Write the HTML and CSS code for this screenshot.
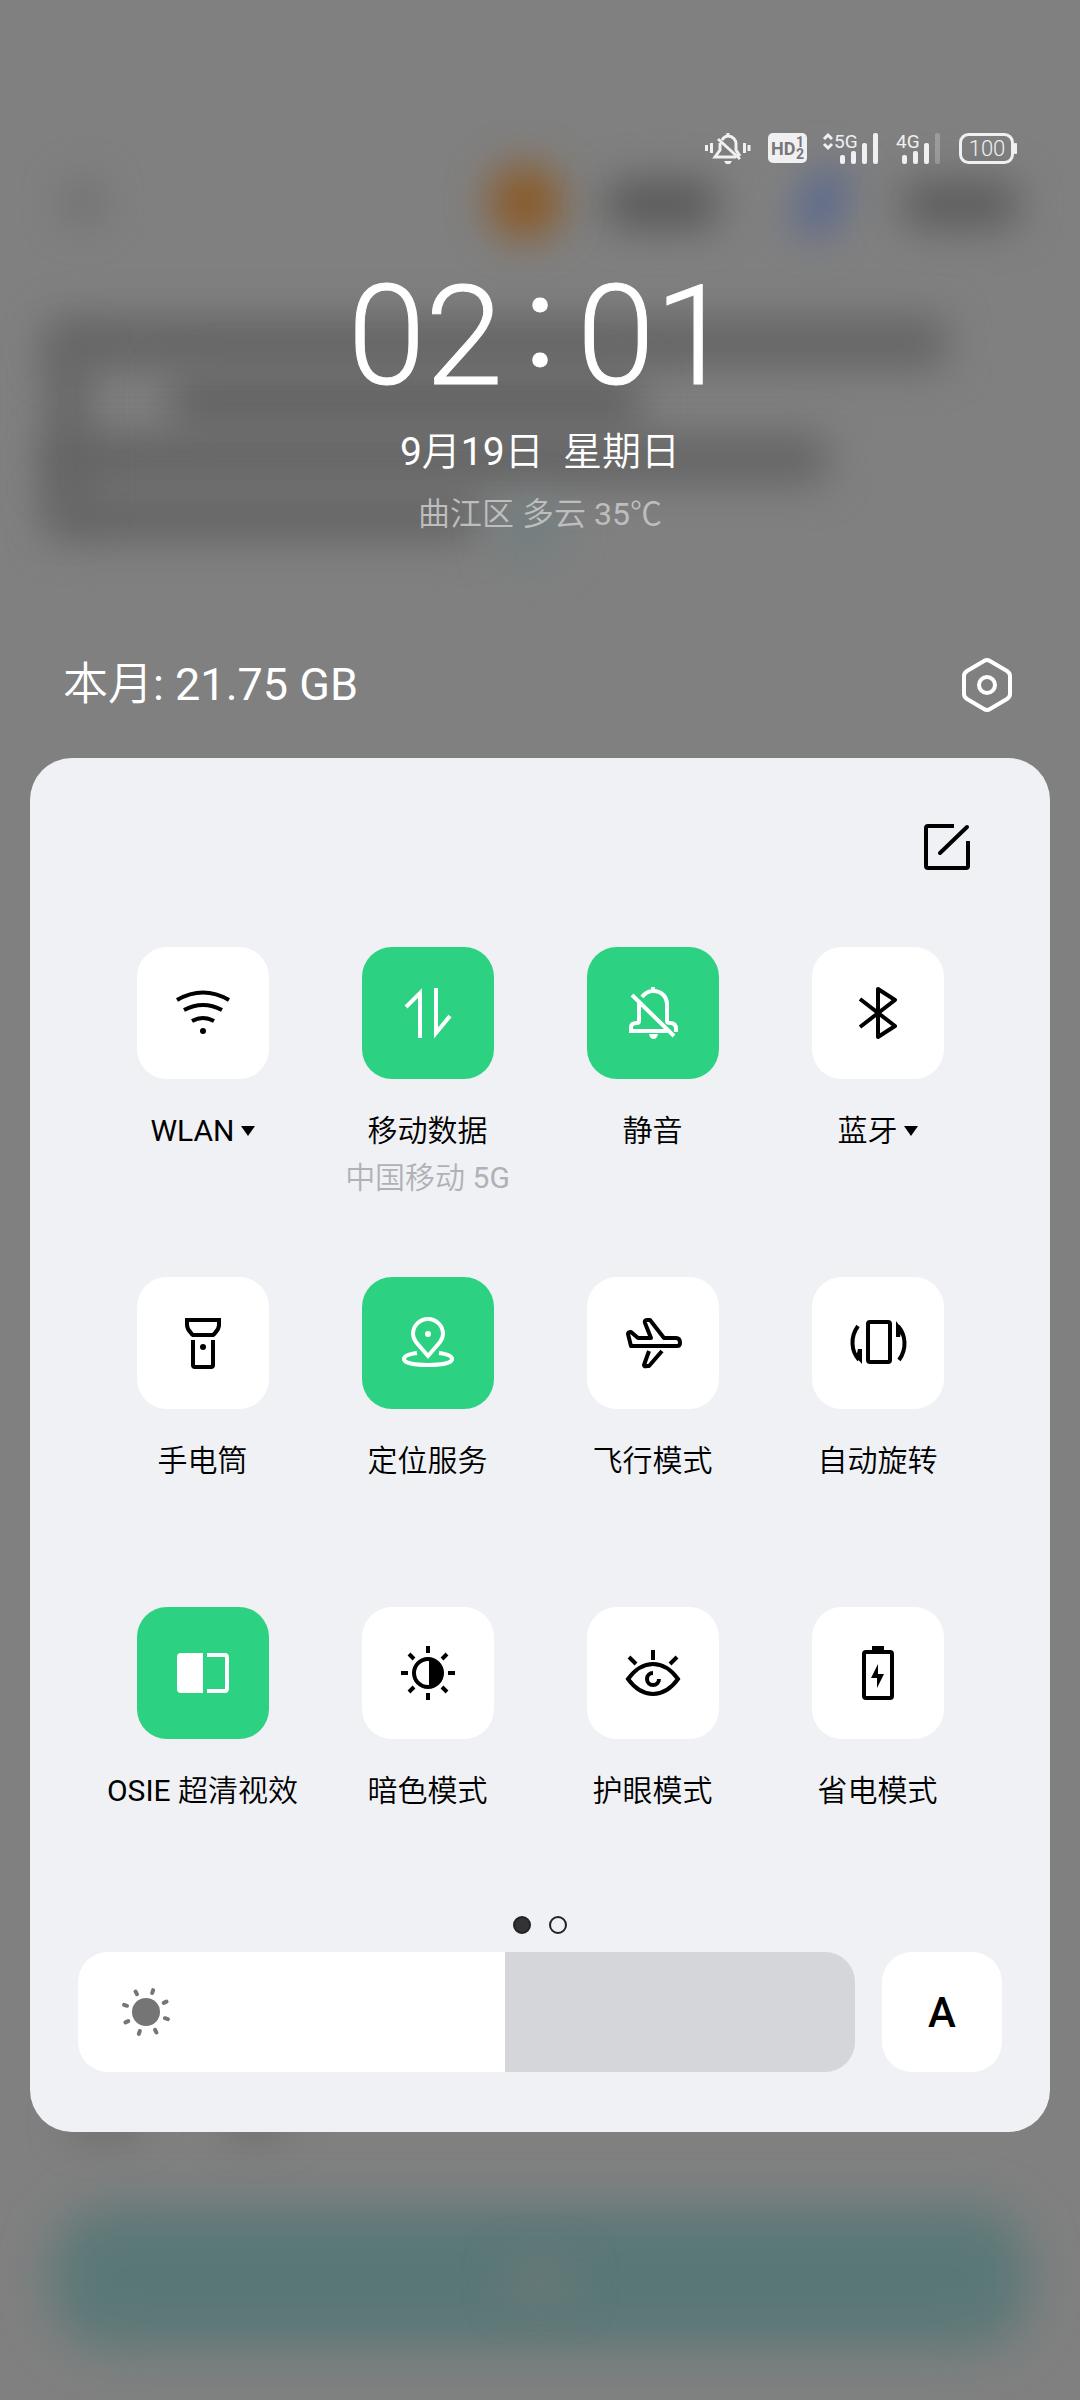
FILE: index.html
```html
<!DOCTYPE html>
<html lang="zh-CN">
<head>
<meta charset="utf-8">
<meta name="viewport" content="width=device-width, initial-scale=1">
<title>控制中心</title>
<link rel="stylesheet" href="styles.css">
</head>
<body>
<div class="backdrop" aria-hidden="true">
  <i class="blob blob-close"></i>
  <i class="blob blob-orange"></i>
  <i class="blob blob-word-a"></i>
  <i class="blob blob-pen"></i>
  <i class="blob blob-word-b"></i>
  <i class="blob blob-line-1"></i>
  <i class="blob blob-line-2"></i>
  <i class="blob blob-line-3"></i>
  <i class="blob blob-line-4"></i>
  <i class="blob blob-line-5"></i>
  <i class="blob blob-side"></i>
  <i class="blob blob-foot-a"></i>
  <i class="blob blob-foot-b"></i>
  <i class="blob blob-action"></i>
  <i class="blob blob-action-label"></i>
</div>
<main class="screen">
  <div class="status">
    <svg class="status-bell" width="46" height="32" viewBox="0 0 46 32" fill="none" stroke="#f0f0f2" stroke-width="3">
      <path d="M1.500 13v6M6.500 11v10M39.500 11v10M44 13v6"/>
      <path d="M23 1v4M17 8c2-3 4-4 6-4 5 0 8 4 8 8v6l4 6M15 11v7l-5 7h21M13 7l22 20"/>
      <path d="M19 29h8l-2 3h-4z" fill="#f0f0f2" stroke="none"/>
    </svg>
    <svg class="status-hd" width="39" height="30" viewBox="0 0 39 30">
      <rect width="39" height="30" rx="5" fill="#f0f0f2"/>
      <text x="3" y="22" class="hd">HD</text>
      <text x="28" y="14" class="hd-sim">1</text>
      <text x="28" y="26" class="hd-sim">2</text>
    </svg>
    <svg class="status-5g" width="57" height="45" viewBox="0 -7 57 45" fill="#f0f0f2">
      <path d="M2 6l4-4 4 4M2 11l4 4 4-4" fill="none" stroke="#f0f0f2" stroke-width="3"/>
      <text x="12" y="15" class="net">5G</text>
      <rect x="18" y="22" width="5" height="9" rx="2"/><rect x="29" y="18" width="5" height="13" rx="2"/><rect x="40" y="10" width="5" height="21" rx="2"/><rect x="51" y="0" width="5" height="31" rx="2"/>
    </svg>
    <svg class="status-4g" width="45" height="45" viewBox="0 -7 45 45" fill="#f0f0f2">
      <text x="0" y="15" class="net">4G</text>
      <rect x="6" y="22" width="5" height="9" rx="2"/><rect x="17" y="18" width="5" height="13" rx="2"/><rect x="28" y="10" width="5" height="21" rx="2"/><rect x="39" y="0" width="5" height="31" rx="2" opacity=".25"/>
    </svg>
    <svg class="status-battery" width="58" height="31" viewBox="0 0 58 31">
      <rect x="1.500" y="1.500" width="52" height="28" rx="8" fill="none" stroke="#f0f0f2" stroke-width="3"/>
      <rect x="55" y="10" width="3" height="11" rx="1" fill="#f0f0f2"/>
      <text x="28" y="23" text-anchor="middle" class="level">100</text>
    </svg>
  </div>
  <header class="head">
    <time class="clock" datetime="02:01"><span>02</span><span class="colon">:</span><span>01</span></time>
    <p class="date">9月19日&nbsp; 星期日</p>
    <p class="weather">曲江区 多云 35℃</p>
  </header>
  <div class="usage">
    <span>本月: 21.75 GB</span>
    <button class="icon-button" type="button" aria-label="设置">
      <svg width="54" height="56" viewBox="0 0 54 56" fill="none" stroke="#fff" stroke-width="4" stroke-linejoin="round"><path d="M24 4q3-2 6 0l17 10q3 2 3 5v18q0 3-3 5L30 52q-3 2-6 0L7 42q-3-2-3-5V19q0-3 3-5z"/><circle cx="27" cy="28" r="8"/></svg>
    </button>
  </div>
  <section class="panel" aria-label="快捷开关">
    <div class="panel-top">
      <button class="icon-button" type="button" aria-label="编辑">
        <svg width="46" height="46" viewBox="0 0 46 46" fill="none" stroke="#000" stroke-width="4"><path d="M30 2H4q-2 0-2 2v38q0 2 2 2h38q2 0 2-2V17"/><path d="M16 29L43 3" stroke-linecap="round"/></svg>
      </button>
    </div>
    <div class="tiles">
      <button class="tile" type="button">
        <span class="face"><svg viewBox="0 0 60 60"><path d="M4 17q26-15 52 0M11 27q19-10 38 0M19 38q11-6 22 0"/><circle class="solid" cx="30" cy="48" r="3"/></svg></span>
        <span class="label">WLAN<i class="caret"></i></span>
      </button>
      <button class="tile on" type="button" aria-pressed="true">
        <span class="face"><svg viewBox="0 0 60 60"><path d="M8 24L22 10v45M38 5v45l14-17"/></svg></span>
        <span class="label">移动数据</span><span class="sub">中国移动 5G</span>
      </button>
      <button class="tile on" type="button" aria-pressed="true">
        <span class="face"><svg viewBox="0 0 60 60"><path d="M30 4v4M19 14c3-4 7-6 11-6 9 0 14 6 14 14v16q0 2 3 2 6 0 6 6v3M16 18v20q0 2-2 2-6 0-6 4v4h36M9 12l42 41"/><path class="solid" d="M26 51h9q-1 5-4.500 5T26 51z"/></svg></span>
        <span class="label">静音</span>
      </button>
      <button class="tile" type="button">
        <span class="face"><svg viewBox="0 0 60 60"><path d="M12 16l35 27-17 11V6l17 11-35 27" stroke-linejoin="round"/></svg></span>
        <span class="label">蓝牙<i class="caret"></i></span>
      </button>
      <button class="tile" type="button">
        <span class="face"><svg viewBox="0 0 60 60"><path d="M14 7h32v5q0 4-4 8-1 2-3 2H21q-2 0-3-2-4-4-4-8zM20 27v25q0 2 2 2h16q2 0 2-2V27"/><circle class="solid" cx="30" cy="34" r="3"/></svg></span>
        <span class="label">手电筒</span>
      </button>
      <button class="tile on" type="button" aria-pressed="true">
        <span class="face"><svg viewBox="0 0 60 60"><path d="M30 43L18 29q-3-4-3-8a15 15 0 0 1 30 0q0 4-3 8zM19 40c-8 1-13 3-13 6 0 4 11 6 24 6s24-2 24-6c0-3-5-5-13-6"/><circle class="solid" cx="30" cy="21" r="3"/></svg></span>
        <span class="label">定位服务</span>
      </button>
      <button class="tile" type="button">
        <span class="face"><svg viewBox="0 0 60 60" stroke-linejoin="round"><path d="M8 33L5 21q0-2 3-2l7 6h13L22 10q-1-3 2-3h3l14 18h12q4 0 4 5 0 3-3 3zM26 38l-5 14q0 2 3 1h2l13-15"/></svg></span>
        <span class="label">飞行模式</span>
      </button>
      <button class="tile" type="button">
        <span class="face"><svg viewBox="0 0 60 60"><rect x="20" y="9" width="22" height="40" rx="2"/><path d="M10 13C2 24 3 38 11 47M51 47C59 36 58 22 50 13"/><path class="solid" d="M14 36v15L8 44l2-8zM48 24V8l6 8-2 8z"/></svg></span>
        <span class="label">自动旋转</span>
      </button>
      <button class="tile on" type="button" aria-pressed="true">
        <span class="face"><svg viewBox="0 0 60 60"><path class="solid" d="M30 10H8q-4 0-4 4v32q0 4 4 4h22z"/><path d="M34 12h18q2 0 2 3v30q0 3-2 3H34"/></svg></span>
        <span class="label">OSIE 超清视效</span>
      </button>
      <button class="tile" type="button">
        <span class="face"><svg viewBox="0 0 60 60"><circle cx="30" cy="30" r="14"/><path class="solid" d="M31 16a14 14 0 0 1 0 28z"/><path d="M30 3v7M30 50v7M3 30h7M50 30h7M11 11l5 5M44 44l5 5M49 11l-5 5M16 44l-5 5"/></svg></span>
        <span class="label">暗色模式</span>
      </button>
      <button class="tile" type="button">
        <span class="face"><svg viewBox="0 0 60 60"><path d="M5 36Q16 21 30 21t25 15Q44 51 30 51T5 36zM30 7v10M6 14l7 7M54 14l-7 7M30 30a6 6 0 1 0 6 6"/></svg></span>
        <span class="label">护眼模式</span>
      </button>
      <button class="tile" type="button">
        <span class="face"><svg viewBox="0 0 60 60"><rect x="16" y="9" width="28" height="46" rx="2"/><path class="solid" d="M24 3h12v6H24zM30 21L23 35h6v10l7-14h-6z"/></svg></span>
        <span class="label">省电模式</span>
      </button>
    </div>
    <div class="pages">
      <button class="page current" type="button" aria-label="第 1 页"></button>
      <button class="page" type="button" aria-label="第 2 页"></button>
    </div>
    <div class="brightness">
      <label class="slider">
        <input type="range" min="0" max="100" value="55" aria-label="亮度">
        <svg class="sun" width="48" height="48" viewBox="0 0 48 48"><circle cx="24" cy="24" r="14" stroke="none"/><path d="M30.200 5L31.100 2.100M41.800 14.900L44.500 13.600M43 30.200L45.900 31.100M33.100 41.800L34.400 44.500M17.800 43L16.900 45.900M6.200 33.100L3.500 34.400M5 17.800L2.100 16.900M14.900 6.200L13.600 3.500"/></svg>
      </label>
      <button class="auto" type="button" aria-label="自动亮度">A</button>
    </div>
  </section>
</main>
</body>
</html>
```
FILE: styles.css
```css
* { box-sizing: border-box; }
body {
  margin: 0;
  background: #808080;
  font-family: Roboto, "Noto Sans CJK SC DemiLight", "Noto Sans CJK SC", sans-serif;
  color: #fff;
}
button { border: 0; padding: 0; background: none; font: inherit; color: inherit; }
svg { display: block; }

/* Out-of-focus app behind the shade */
.backdrop { position: absolute; inset: 0; overflow: hidden; z-index: -1; }
.blob { position: absolute; background: #646464; filter: blur(20px); border-radius: 16px; }
.blob-close { left: 66px; top: 182px; width: 34px; height: 40px; background: #6a6a6a; }
.blob-orange { left: 488px; top: 164px; width: 74px; height: 76px; border-radius: 50%; background: #8a5a28; }
.blob-word-a { left: 606px; top: 180px; width: 112px; height: 48px; background: #585858; }
.blob-pen { left: 804px; top: 166px; width: 36px; height: 72px; background: #556590; transform: rotate(25deg); }
.blob-word-b { left: 902px; top: 180px; width: 116px; height: 48px; background: #5c5c5c; }
.blob-line-1 { left: 48px; top: 318px; width: 900px; height: 50px; }
.blob-line-2 { left: 170px; top: 372px; width: 470px; height: 60px; }
.blob-line-3 { left: 48px; top: 434px; width: 780px; height: 50px; }
.blob-line-4 { left: 48px; top: 492px; width: 430px; height: 48px; }
.blob-line-5 { left: 48px; top: 340px; width: 40px; height: 180px; }
.blob-side { left: 500px; top: 500px; width: 60px; height: 60px; background: #727f80; }
.blob-foot-a { left: 70px; top: 2110px; width: 70px; height: 24px; }
.blob-foot-b { left: 225px; top: 2110px; width: 60px; height: 24px; }
.blob-action { left: 52px; right: 52px; top: 2208px; height: 140px; border-radius: 60px; background: #5a7777; filter: blur(24px); }
.blob-action-label { left: 506px; top: 2262px; width: 68px; height: 40px; background: #697977; }

.screen { padding: 125px 30px 271px; }

.status { display: flex; align-items: center; justify-content: flex-end; height: 46px; padding-right: 33px; }
.status-hd { margin-left: 17px; }
.status-5g { margin-left: 15px; }
.status-4g { margin-left: 17px; }
.status-battery { margin-left: 18px; }
.hd { font-size: 18px; font-weight: 700; fill: #77777a; }
.hd-sim { font-size: 14px; font-weight: 700; fill: #77777a; }
.net { font-size: 19px; }
.level { font-size: 22px; font-weight: 300; fill: #f0f0f2; }

.head { display: flex; flex-direction: column; align-items: center; padding-top: 69px; }
.clock { display: flex; align-items: center; font-size: 140px; font-weight: 300; line-height: 164px; -webkit-text-stroke: 1px #fff; }
.colon { width: 74px; font-size: 128px; text-align: center; padding-bottom: 28px; font-weight: 400; }
.date, .weather { margin: 0; }
.date { font-size: 39px; line-height: 56px; margin-top: -8px; }
.weather { font-size: 32px; line-height: 48px; margin-top: 10px; color: #bebebe; }

.usage { display: flex; align-items: center; justify-content: space-between; padding: 0 36px 0 33px; margin-top: 113px; font-size: 45px; line-height: 68px; }

.panel { margin-top: 39px; padding: 66px 48px 60px; border-radius: 42px; background: #f0f1f5; color: #000; }
.panel-top { display: flex; justify-content: flex-end; padding-right: 32px; }
.tiles { display: grid; grid-template-columns: repeat(4, 1fr); grid-auto-rows: minmax(264px, auto); row-gap: 66px; margin: 77px 12px 0; }
.tile { display: flex; flex-direction: column; align-items: center; justify-content: flex-start; font-size: 30px; white-space: nowrap; }
.face { display: flex; align-items: center; justify-content: center; width: 132px; height: 132px; border-radius: 30px; background: #fff; }
.on .face { background: #2cd282; color: #fff; }
.face svg { width: 60px; height: 60px; fill: none; stroke: currentColor; stroke-width: 4; }
.face .solid { fill: currentColor; stroke: none; }
.label { display: flex; align-items: center; gap: 6px; margin-top: 29px; line-height: 46px; }
.caret { border: 7px solid transparent; border-top: 10px solid #000; border-bottom: 0; }
.sub { line-height: 48px; color: #b0b1b4; }

.pages { display: flex; justify-content: center; gap: 18px; margin-top: 45px; }
.page { width: 18px; height: 18px; border: 2px solid #222; border-radius: 50%; }
.current { background: #333; }

.brightness { display: flex; gap: 27px; margin-top: 18px; }
.slider { position: relative; flex: 1; height: 120px; }
.slider input {
  appearance: none;
  display: block;
  width: 100%;
  height: 120px;
  margin: 0;
  border-radius: 30px;
  background: linear-gradient(to right, #fff 55%, #d5d6da 55%);
}
.slider input::-webkit-slider-thumb { appearance: none; width: 1px; height: 120px; }
.sun { position: absolute; left: 44px; top: 36px; overflow: visible; fill: #757575; stroke: #757575; stroke-width: 4; stroke-linecap: round; }
.auto { width: 120px; height: 120px; border-radius: 30px; background: #fff; font-size: 42px; font-weight: 500; }
```
